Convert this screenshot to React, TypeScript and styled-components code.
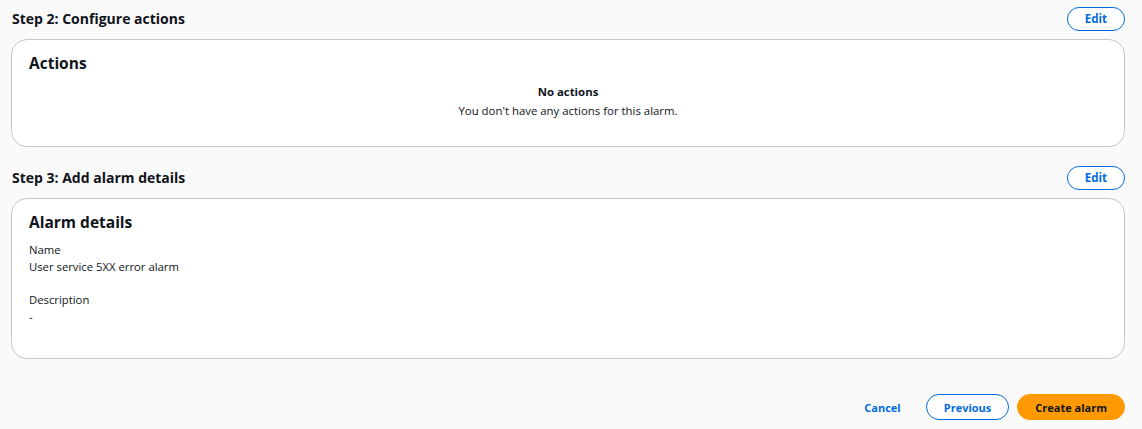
import React from "react";
import styled, { createGlobalStyle } from "styled-components";

const Global = createGlobalStyle`
  html, body { margin: 0; padding: 0; background: #fafafa; }
  body { font-family: "Open Sans", "Noto Sans", Arial, sans-serif; color: #0f141a; }
  * { box-sizing: border-box; }
`;

const Page = styled.div`
  padding: 7px 17px 10px 11px;
  display: flex;
  flex-direction: column;
`;

const Section = styled.section<{ $gap?: number }>`
  display: flex;
  flex-direction: column;
  gap: 8px;
  margin-bottom: ${(p) => p.$gap ?? 0}px;
`;

const SectionHeader = styled.div`
  display: flex;
  align-items: center;
  justify-content: space-between;
  height: 24px;
  padding-left: 1px;
`;

const StepTitle = styled.h3`
  margin: 0;
  font-size: 14px;
  font-weight: 700;
  line-height: 18px;
  color: #0f141a;
`;

const OutlineButton = styled.button`
  font-family: inherit;
  font-size: 11.5px;
  font-weight: 700;
  color: #006ce0;
  background: #ffffff;
  border: 1.5px solid #006ce0;
  border-radius: 16px;
  height: 24px;
  padding: 0 17px;
  line-height: 20px;
  cursor: pointer;
`;

const Card = styled.div<{ $height: number }>`
  background: #ffffff;
  border: 1px solid #c6c6cd;
  border-radius: 16px;
  height: ${(p) => p.$height}px;
  padding: 13px 17px 0 17px;
  display: flex;
  flex-direction: column;
`;

const CardTitle = styled.h2`
  margin: 0;
  font-size: 15.5px;
  font-weight: 700;
  line-height: 20px;
  color: #0f141a;
`;

const Empty = styled.div`
  display: flex;
  flex-direction: column;
  align-items: center;
  margin-top: 9px;
  font-size: 11.4px;
  line-height: 19px;
`;

const EmptyTitle = styled.div`
  font-weight: 700;
`;

const Field = styled.div`
  display: flex;
  flex-direction: column;
  font-size: 11.3px;
  line-height: 17px;
  margin-top: 9px;
  & + & { margin-top: 16px; }
`;

const Footer = styled.div`
  display: flex;
  justify-content: flex-end;
  align-items: center;
  gap: 8px;
  margin-top: 35px;
`;

const LinkButton = styled.button`
  font-family: inherit;
  font-size: 11px;
  font-weight: 700;
  color: #006ce0;
  background: transparent;
  border: none;
  height: 26px;
  padding: 0 17px;
  cursor: pointer;
`;

const FooterButton = styled.button<{ $primary?: boolean }>`
  font-family: inherit;
  font-size: 11px;
  font-weight: 700;
  height: 26px;
  border-radius: 16px;
  padding: 0 17px;
  cursor: pointer;
  color: ${(p) => (p.$primary ? "#0f141a" : "#006ce0")};
  background: ${(p) => (p.$primary ? "#ff9900" : "#ffffff")};
  border: 1.5px solid ${(p) => (p.$primary ? "#ff9900" : "#006ce0")};
`;

export default function App() {
  return (
    <>
      <Global />
      <Page>
        <Section $gap={19}>
          <SectionHeader>
            <StepTitle>Step 2: Configure actions</StepTitle>
            <OutlineButton>Edit</OutlineButton>
          </SectionHeader>
          <Card $height={108}>
            <CardTitle>Actions</CardTitle>
            <Empty>
              <EmptyTitle>No actions</EmptyTitle>
              <div>You don't have any actions for this alarm.</div>
            </Empty>
          </Card>
        </Section>
        <Section>
          <SectionHeader>
            <StepTitle>Step 3: Add alarm details</StepTitle>
            <OutlineButton>Edit</OutlineButton>
          </SectionHeader>
          <Card $height={161}>
            <CardTitle>Alarm details</CardTitle>
            <Field>
              <span>Name</span>
              <span>User service 5XX error alarm</span>
            </Field>
            <Field>
              <span>Description</span>
              <span>-</span>
            </Field>
          </Card>
        </Section>
        <Footer>
          <LinkButton>Cancel</LinkButton>
          <FooterButton>Previous</FooterButton>
          <FooterButton $primary>Create alarm</FooterButton>
        </Footer>
      </Page>
    </>
  );
}
